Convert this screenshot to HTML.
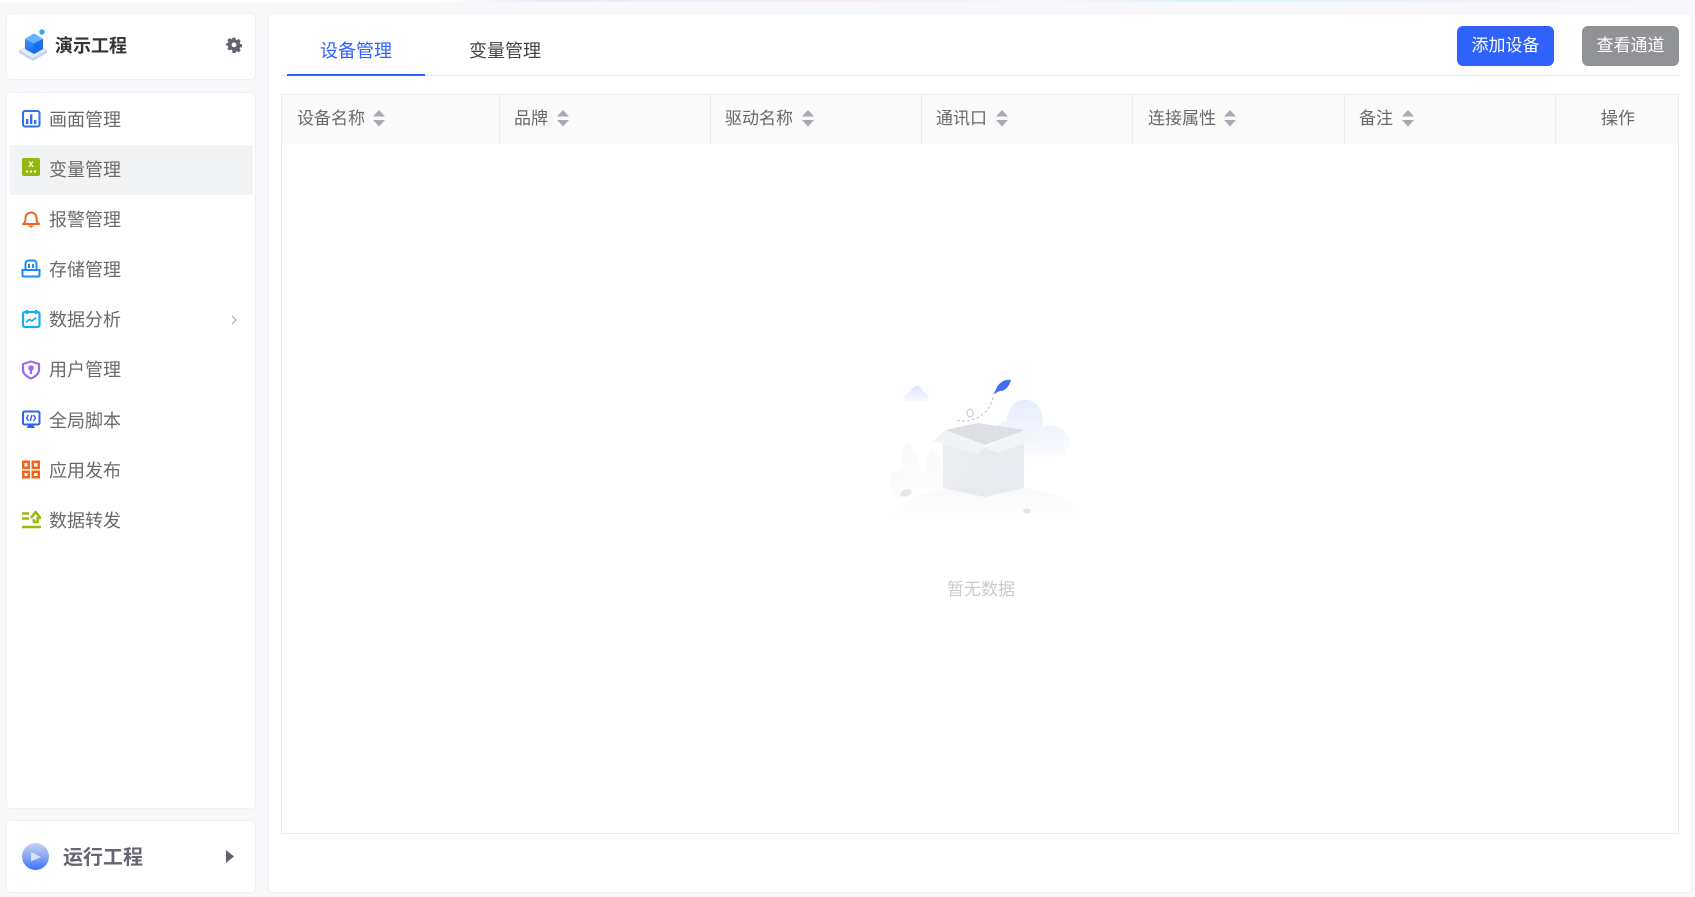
<!DOCTYPE html>
<html lang="zh-CN"><head><meta charset="utf-8"><title>变量管理</title>
<style>
*{box-sizing:border-box;margin:0;padding:0}
html,body{width:1695px;height:897px;overflow:hidden;background:#f8f8fa;font-family:"Liberation Sans","Noto Sans CJK SC",sans-serif;color:#666}
.a{position:absolute}
.card{position:absolute;background:#fff;border:1px solid #f0eff3;border-radius:5px}
.t{position:absolute;white-space:nowrap;line-height:24px;height:24px}
.m{font-size:18px;left:49px;color:#6a6a6a}
.h{font-size:17px;top:107px;color:#696969}
.ic{position:absolute;left:21px;width:20px;height:20px}
.s{position:absolute;top:110px;width:12px;height:17px}
.d{position:absolute;top:94px;width:1px;height:50px;background:#e9edf3}
</style></head><body>
<div class="a" style="left:0;top:0;width:1695px;height:2px;background:linear-gradient(90deg,#fff 0,#fff 26%,#e8ecfb 32%,#fbe9f8 50%,#f6f7fb 62%,#dff1fd 70%,#e8f3fd 85%,#f6f8fc 100%)"></div>

<div class="card" style="left:6px;top:13px;width:250px;height:67px"></div>
<svg class="a" style="left:18px;top:28px" width="32" height="34" viewBox="0 0 32 34">
<defs><linearGradient id="g1" x1="0" y1="0" x2="0" y2="1"><stop offset="0" stop-color="#4ea4ff"/><stop offset="1" stop-color="#1668ee"/></linearGradient></defs>
<path d="M1 22 15 14 29 22 29 25 15 33 1 25Z" fill="#c3d4f2"/>
<path d="M1 22 15 14 29 22 15 30Z" fill="#e3ebf9"/>
<path d="M7 11 16 5.500 25 11 25 21 16 26 7 21Z" fill="url(#g1)"/>
<path d="M7 11 16 5.500 25 11 16 15.500Z" fill="#62b2ff"/>
<path d="M16 15.500 25 11 25 21 16 26Z" fill="#1a6cf0"/>
<circle cx="24" cy="4" r="2.700" fill="#2fa6fb"/>
</svg>
<div class="t" style="left:55px;top:34px;font-size:18px;font-weight:700;color:#333">演示工程</div>
<svg class="a" style="left:226px;top:37px" width="16" height="16" viewBox="0 0 16 16"><path fill="#62626f" fill-rule="evenodd" d="M6.400 0h3.200l.4 2.200 1.300.6 1.900-1.200 2.200 2.200-1.200 1.900.6 1.300 2.200.4v3.200l-2.200.4-.6 1.300 1.200 1.900-2.200 2.200-1.900-1.200-1.300.6-.4 2.200H6.400L6 13.800l-1.300-.6-1.900 1.200L.6 12.200l1.200-1.900-.6-1.300L-1 8.600V6.400l2.200-.4.6-1.300L.6 2.800 2.800.6l1.900 1.200L6 1.200ZM8 5.300a2.700 2.700 0 1 0 0 5.400 2.700 2.700 0 0 0 0-5.400Z" transform="translate(.8 .6) scale(.9)"/></svg>

<div class="card" style="left:6px;top:92px;width:250px;height:717px"></div>
<div class="a" style="left:10px;top:145px;width:243px;height:50px;background:#f2f3f5"></div>

<svg class="ic" style="top:109px" viewBox="0 0 20 20"><rect x="2" y="2" width="16.500" height="15.500" rx="2" fill="none" stroke="#2f6bff" stroke-width="2"/><path d="M5 10h2.400v5H5zM9 5.500h2.400V15H9zM13 11h2.400v4H13z" fill="#2f6bff"/></svg>
<svg class="ic" style="top:158px" viewBox="0 0 20 20"><rect x="1" y="0" width="18" height="18" rx="2" fill="#93b70a"/><text x="10" y="9" text-anchor="middle" font-size="10" font-weight="700" fill="#fff" font-family="Liberation Sans">x</text><path d="M5 12.500h2v2H5zM9 12.500h2v2H9zM13 12.500h2v2h-2z" fill="#fff"/></svg>
<svg class="ic" style="top:209px" viewBox="0 0 20 20"><path d="M2 15c2.200-1.500 2.500-3 2.500-6a5.500 5.500 0 0 1 11 0c0 3 .3 4.500 2.500 6Z" fill="none" stroke="#f2651f" stroke-width="2" stroke-linejoin="round"/><path d="M7 16.500h6L10 19Z" fill="#f2651f"/></svg>
<svg class="ic" style="top:259px" viewBox="0 0 20 20"><path d="M4.500 11V4.500A3 3 0 0 1 7.500 1.500h5a3 3 0 0 1 3 3V11" fill="none" stroke="#1b8cf8" stroke-width="2"/><path d="M8 5v4M12 5v4" stroke="#1b8cf8" stroke-width="2"/><path d="M1.500 11h17v5.500a1 1 0 0 1-1 1h-15a1 1 0 0 1-1-1Z" fill="none" stroke="#1b8cf8" stroke-width="2"/></svg>
<svg class="ic" style="top:310px" viewBox="0 0 20 20"><rect x="2" y="2" width="16.500" height="15" rx="2" fill="none" stroke="#18adf8" stroke-width="2.200"/><path d="M6 0v4M15 0v4" stroke="#18adf8" stroke-width="2.200"/><path d="M5 12.500 8.500 9.500 11 11 15 7.500" fill="none" stroke="#18adf8" stroke-width="1.800"/></svg>
<svg class="ic" style="top:360px" viewBox="0 0 20 20"><path d="M10 1.500 18 4v6c0 4-3.500 6.500-8 8.500-4.500-2-8-4.500-8-8.500V4Z" fill="none" stroke="#9b6bf6" stroke-width="2.200"/><circle cx="10" cy="8" r="2.800" fill="#9b6bf6"/><path d="M8.900 9h2.200v5H8.900z" fill="#9b6bf6"/></svg>
<svg class="ic" style="top:410px" viewBox="0 0 20 20"><rect x="2" y="1.500" width="16.500" height="13" rx="1.500" fill="none" stroke="#2f62f0" stroke-width="2"/><path d="M7.500 5 5.500 8l2 3M12.500 5l2 3-2 3M11 5 9.300 11" fill="none" stroke="#2f62f0" stroke-width="1.400"/><path d="M5.500 18h8.500L12 14.500H8Z" fill="#2f62f0"/></svg>
<svg class="ic" style="top:460px" viewBox="0 0 20 20"><path fill="#f2651f" fill-rule="evenodd" d="M1 .5h8v8.500H1Zm2.500 2.500v3.500h3V3ZM10.500 .5h8.500v8.500h-8.500Zm2.500 2.500v3.500h3.500V3ZM1 10.500h8v8H1Zm2.500 2.500v3h3v-3ZM10.500 10.500h8.500v8h-8.500Zm2.500 2.500v3h3.500v-3Z"/></svg>
<svg class="ic" style="top:510px" viewBox="0 0 20 20"><path d="M1 3.500h7M1 8.500h7M1 17h19" stroke="#99b70f" stroke-width="2.400"/><path d="M10 8 14.500 2 19.500 8 16.500 8 16.500 12 13 12 12.500 9" fill="none" stroke="#99b70f" stroke-width="2.400"/></svg>

<div class="t m" style="top:108px">画面管理</div>
<div class="t m" style="top:158px">变量管理</div>
<div class="t m" style="top:208px">报警管理</div>
<div class="t m" style="top:258px">存储管理</div>
<div class="t m" style="top:308px">数据分析</div>
<div class="t m" style="top:358px">用户管理</div>
<div class="t m" style="top:409px">全局脚本</div>
<div class="t m" style="top:459px">应用发布</div>
<div class="t m" style="top:509px">数据转发</div>
<svg class="a" style="left:229px;top:314px" width="10" height="12" viewBox="0 0 10 12"><path d="M3 2l4 4-4 4" fill="none" stroke="#a6a8ae" stroke-width="1.200"/></svg>

<div class="card" style="left:6px;top:820px;width:250px;height:73px"></div>
<svg class="a" style="left:22px;top:843px" width="27" height="27" viewBox="0 0 27 27">
<defs><linearGradient id="g2" x1="0" y1="0" x2="0" y2="1"><stop offset="0" stop-color="#c4d2f6"/><stop offset=".5" stop-color="#8aa8f0"/><stop offset="1" stop-color="#3f70fb"/></linearGradient></defs>
<circle cx="13.500" cy="13.500" r="13.500" fill="url(#g2)"/><path d="M9 9 19 14 9 18.500Z" fill="#d6e0f9"/></svg>
<div class="t" style="left:63px;top:846px;font-size:20px;font-weight:700;color:#666672">运行工程</div>
<svg class="a" style="left:226px;top:850px" width="9" height="13" viewBox="0 0 9 13"><path d="M0 0 8 6.500 0 13Z" fill="#62626f"/></svg>

<div class="card" style="left:268px;top:13px;width:1424px;height:880px"></div>
<div class="t" style="left:320px;top:39px;font-size:18px;color:#2f63ff">设备管理</div>
<div class="t" style="left:469px;top:39px;font-size:18px;color:#444">变量管理</div>
<div class="a" style="left:281px;top:75px;width:1398px;height:1px;background:#e6e7ef"></div>
<div class="a" style="left:287px;top:74px;width:138px;height:2px;background:#2f63ff"></div>
<div class="a" style="left:1457px;top:26px;width:97px;height:40px;background:#2e62fb;border-radius:6px;color:#fff;font-size:17px;line-height:40px;text-align:center">添加设备</div>
<div class="a" style="left:1582px;top:26px;width:97px;height:40px;background:#919296;border-radius:6px;color:#fff;font-size:17px;line-height:40px;text-align:center">查看通道</div>

<div class="a" style="left:281px;top:94px;width:1398px;height:740px;border:1px solid #e9edf3;border-top-color:#eceef2"></div>
<div class="a" style="left:282px;top:95px;width:1396px;height:49px;background:#fafafa"></div>
<div class="d" style="left:499px"></div><div class="d" style="left:710px"></div><div class="d" style="left:921px"></div><div class="d" style="left:1132px"></div><div class="d" style="left:1344px"></div><div class="d" style="left:1555px"></div>
<div class="t h" style="left:297px">设备名称</div>
<div class="t h" style="left:514px">品牌</div>
<div class="t h" style="left:725px">驱动名称</div>
<div class="t h" style="left:936px">通讯口</div>
<div class="t h" style="left:1148px">连接属性</div>
<div class="t h" style="left:1359px">备注</div>
<div class="t h" style="left:1601px">操作</div>
<svg class="s" style="left:373px" viewBox="0 0 12 17"><path d="M6 0 12 6.500H0ZM0 10H12L6 16.500Z" fill="#a9abb3"/></svg>
<svg class="s" style="left:557px" viewBox="0 0 12 17"><path d="M6 0 12 6.500H0ZM0 10H12L6 16.500Z" fill="#a9abb3"/></svg>
<svg class="s" style="left:802px" viewBox="0 0 12 17"><path d="M6 0 12 6.500H0ZM0 10H12L6 16.500Z" fill="#a9abb3"/></svg>
<svg class="s" style="left:996px" viewBox="0 0 12 17"><path d="M6 0 12 6.500H0ZM0 10H12L6 16.500Z" fill="#a9abb3"/></svg>
<svg class="s" style="left:1224px" viewBox="0 0 12 17"><path d="M6 0 12 6.500H0ZM0 10H12L6 16.500Z" fill="#a9abb3"/></svg>
<svg class="s" style="left:1402px" viewBox="0 0 12 17"><path d="M6 0 12 6.500H0ZM0 10H12L6 16.500Z" fill="#a9abb3"/></svg>

<svg class="a" style="left:870px;top:360px" width="240" height="200" viewBox="0 0 240 200">
<defs>
<linearGradient id="c1" x1="0" y1="0" x2="0" y2="1"><stop offset="0" stop-color="#dfe6fb"/><stop offset="1" stop-color="#f8f9fe"/></linearGradient>
<linearGradient id="c2" x1="0" y1="0" x2="0" y2="1"><stop offset="0" stop-color="#e6edfc"/><stop offset="1" stop-color="#fbfcff"/></linearGradient>
<linearGradient id="c3" x1="0" y1="0" x2="0" y2="1"><stop offset="0" stop-color="#f7f8fa"/><stop offset="1" stop-color="#fff"/></linearGradient>
<linearGradient id="c4" x1="0" y1="0" x2="0" y2="1"><stop offset="0" stop-color="#f9f9fa"/><stop offset="1" stop-color="#fdfdfe"/></linearGradient>
<linearGradient id="b1" x1="0" y1="0" x2="1" y2="1"><stop offset="0" stop-color="#eceef1"/><stop offset="1" stop-color="#e7e9ee"/></linearGradient>
</defs>
<path d="M35 41c-2-6 2-9 6-9 0-4 3-6 6-6s6 2 6 6c4 0 6 4 5 9Z" fill="url(#c1)"/>
<path d="M125 73c0-7 6-12 12-12 0-5 0-6 2-10a17 17 0 0 1 33 5c2 5 0 8 0 11 10-5 27 2 27 14 0 6-2 9-4 16h-70Z" fill="url(#c2)"/>
<path d="M32 130C30 105 30 85 38 83 48 88 52 110 54 130Z" fill="url(#c4)"/>
<path d="M53 130C53 105 58 90 63 90 70 95 73 110 73 130Z" fill="url(#c4)"/>
<ellipse cx="27" cy="125" rx="8" ry="15" fill="url(#c4)"/>
<path d="M18 160C28 135 78 125 118 125S208 135 217 160Z" fill="url(#c3)"/>
<ellipse cx="36" cy="133" rx="6" ry="3.500" fill="#e6e8ec" transform="rotate(-20 36 133)"/>
<ellipse cx="157" cy="151" rx="4" ry="2.500" fill="#e4e6ea"/>
<path d="M75 70 108 63 155 70 115 85Z" fill="#dcdfe3"/>
<path d="M73 82 115 88V137L73 128Z" fill="url(#b1)"/>
<path d="M115 88 154 80V128L115 137Z" fill="#e8ecf1"/>
<path d="M63 81 75 70 116 86 107 94Z" fill="#f1f3f5"/>
<path d="M115 87 155 70 165 80 127 93Z" fill="#f2f4f6"/>
<path d="M87 60C95 63 105 60 112 55 118 50 121 46 123 37" fill="none" stroke="#c2c6cd" stroke-width="1" stroke-dasharray="3 2"/>
<ellipse cx="100" cy="53" rx="3" ry="4" fill="none" stroke="#c2c6cd" stroke-width="1"/>
<path d="M121 35C124 35 125 31 127 27 130 22 135 19 141 20 139 27 135 31 130 31 127 32 125 34 121 35Z" fill="#3f6ff2"/>
</svg>
<div class="t" style="left:947px;top:578px;font-size:17px;color:#c9cbcf">暂无数据</div>
</body></html>
